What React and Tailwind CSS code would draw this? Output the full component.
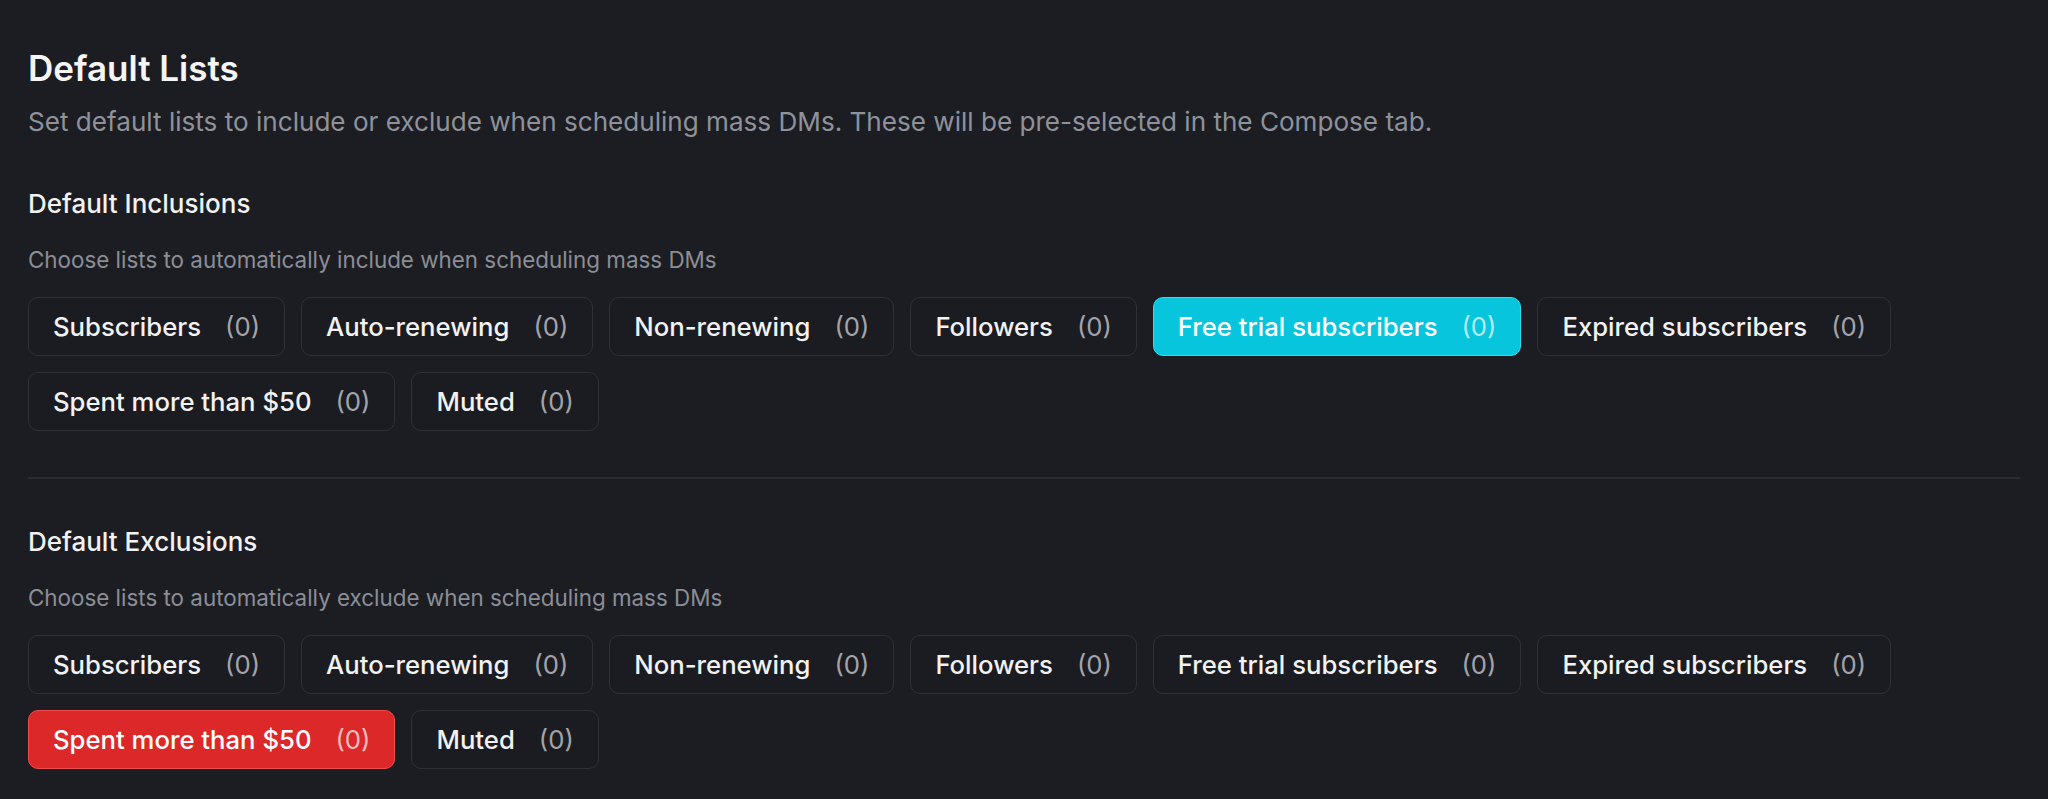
const LISTS = [
  "Subscribers",
  "Auto-renewing",
  "Non-renewing",
  "Followers",
  "Free trial subscribers",
  "Expired subscribers",
  "Spent more than $50",
  "Muted",
];

function Chip({ label, count, tone }) {
  const base =
    "flex h-[59px] items-center rounded-[10px] border px-[24px] text-[25.7px] leading-[32px]";
  const tones = {
    idle: "border-[#2f3139] bg-[#1b1c21] text-[#f2f2f3]",
    include: "border-[#2fdcf3] bg-[#08c5de] text-white",
    exclude: "border-[#ef4d4d] bg-[#dc2828] text-white",
  };
  const countColor = tone === "idle" ? "text-[#a3a4aa]" : "text-white/70";

  return (
    <button type="button" className={`${base} ${tones[tone]}`}>
      <span className="font-medium">{label}</span>
      <span className={`ml-[24px] ${countColor}`}>({count})</span>
    </button>
  );
}

function ListGroup({ title, description, selected, tone }) {
  return (
    <section>
      <h3 className="text-[26px] font-medium leading-[32px] text-[#f2f2f3]">{title}</h3>
      <p className="mt-[26px] text-[22.4px] leading-[28px] text-[#8b8e96]">{description}</p>
      <div className="mt-[23px] flex flex-wrap gap-[16px]">
        {LISTS.map((name) => (
          <Chip key={name} label={name} count={0} tone={name === selected ? tone : "idle"} />
        ))}
      </div>
    </section>
  );
}

export default function App() {
  return (
    <div
      className="min-h-screen bg-[#1c1d22] px-[28px] pt-[48px]"
      style={{ fontFamily: "Inter, 'Noto Sans', sans-serif" }}
    >
      <h2 className="text-[35px] font-semibold leading-[40px] text-[#f5f5f6]">Default Lists</h2>
      <p className="mt-[18px] text-[26.1px] leading-[32px] text-[#8f929a]">
        Set default lists to include or exclude when scheduling mass DMs. These will be pre-selected in the Compose tab.
      </p>

      <div className="mt-[50px]">
        <ListGroup
          title="Default Inclusions"
          description="Choose lists to automatically include when scheduling mass DMs"
          selected="Free trial subscribers"
          tone="include"
        />
      </div>

      <div className="mt-[46px] h-[2px] bg-[#2a2c33]" />

      <div className="mt-[47px]">
        <ListGroup
          title="Default Exclusions"
          description="Choose lists to automatically exclude when scheduling mass DMs"
          selected="Spent more than $50"
          tone="exclude"
        />
      </div>
    </div>
  );
}
